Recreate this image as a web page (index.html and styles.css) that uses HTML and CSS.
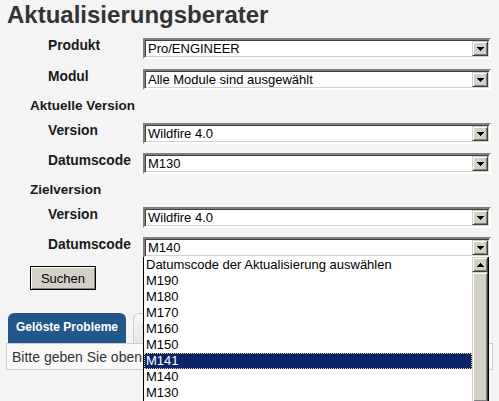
FILE: index.html
```html
<!DOCTYPE html>
<html lang="de">
<head>
    <meta charset="UTF-8">
    <meta name="viewport" content="width=device-width, initial-scale=1.0">
    <title>Aktualisierungsberater</title>
    <link rel="stylesheet" href="styles.css">
</head>
<body>
    <div class="page">
        <h1 class="title">Aktualisierungsberater</h1>

        <div class="group first">
            <div class="row">
                <span class="label">Produkt</span>
                <div class="select"><span class="value">Pro/ENGINEER</span><span class="arrow"><svg width="7" height="4" viewBox="0 0 7 4" shape-rendering="crispEdges"><path d="M0 0h7v1h-1v1h-1v1h-1v1h-1v-1h-1v-1h-1v-1h-1z" fill="#000"/></svg></span></div>
            </div>
            <div class="row">
                <span class="label">Modul</span>
                <div class="select"><span class="value">Alle Module sind ausgewählt</span><span class="arrow"><svg width="7" height="4" viewBox="0 0 7 4" shape-rendering="crispEdges"><path d="M0 0h7v1h-1v1h-1v1h-1v1h-1v-1h-1v-1h-1v-1h-1z" fill="#000"/></svg></span></div>
            </div>
        </div>

        <h2 class="section">Aktuelle Version</h2>
        <div class="group">
            <div class="row">
                <span class="label">Version</span>
                <div class="select"><span class="value">Wildfire 4.0</span><span class="arrow"><svg width="7" height="4" viewBox="0 0 7 4" shape-rendering="crispEdges"><path d="M0 0h7v1h-1v1h-1v1h-1v1h-1v-1h-1v-1h-1v-1h-1z" fill="#000"/></svg></span></div>
            </div>
            <div class="row">
                <span class="label">Datumscode</span>
                <div class="select"><span class="value">M130</span><span class="arrow"><svg width="7" height="4" viewBox="0 0 7 4" shape-rendering="crispEdges"><path d="M0 0h7v1h-1v1h-1v1h-1v1h-1v-1h-1v-1h-1v-1h-1z" fill="#000"/></svg></span></div>
            </div>
        </div>

        <h2 class="section">Zielversion</h2>
        <div class="group">
            <div class="row">
                <span class="label">Version</span>
                <div class="select"><span class="value">Wildfire 4.0</span><span class="arrow"><svg width="7" height="4" viewBox="0 0 7 4" shape-rendering="crispEdges"><path d="M0 0h7v1h-1v1h-1v1h-1v1h-1v-1h-1v-1h-1v-1h-1z" fill="#000"/></svg></span></div>
            </div>
            <div class="row">
                <span class="label">Datumscode</span>
                <div class="select open">
                    <span class="value">M140</span><span class="arrow"><svg width="7" height="4" viewBox="0 0 7 4" shape-rendering="crispEdges"><path d="M0 0h7v1h-1v1h-1v1h-1v1h-1v-1h-1v-1h-1v-1h-1z" fill="#000"/></svg></span>
                    <div class="listbox">
                        <ul class="options">
                            <li>Datumscode der Aktualisierung auswählen</li>
                            <li>M190</li>
                            <li>M180</li>
                            <li>M170</li>
                            <li>M160</li>
                            <li>M150</li>
                            <li class="selected">M141</li>
                            <li>M140</li>
                            <li>M130</li>
                        </ul>
                        <div class="scrollbar">
                            <span class="scroll-btn"><svg width="7" height="4" viewBox="0 0 7 4" shape-rendering="crispEdges"><path d="M3 0h1v1h1v1h1v1h1v1h-7v-1h1v-1h1v-1h1z" fill="#000"/></svg></span>
                            <span class="thumb"></span>
                        </div>
                    </div>
                </div>
            </div>
        </div>

        <button class="search">Suchen</button>

        <div class="tabs">
            <span class="tab active">Gelöste Probleme</span>
            <span class="tab">Gemeldete Probleme</span>
        </div>
        <div class="tab-body">Bitte geben Sie oben die gewünschten Kriterien ein.</div>
    </div>
</body>
</html>
```

FILE: styles.css
```css
body {
    margin: 0;
    background-color: #f4f4f4;
    font-family: "Liberation Sans", Arial, sans-serif;
    color: #1a1a1a;
    height: 401px;
    overflow: hidden;
}
.page {
    padding: 0 6px;
}
.title {
    margin: 1px 0 0 1px;
    font-size: 24px;
    line-height: 28px;
    font-weight: bold;
    color: #333;
}
.group {
    display: flex;
    flex-direction: column;
    gap: 9px;
    padding-left: 42px;
}
.group.first {
    margin-top: 9px;
    gap: 10px;
}
.row {
    display: flex;
    align-items: flex-start;
}
.label {
    width: 95px;
    font-size: 13.8px;
    line-height: 16px;
    font-weight: bold;
}
.section {
    margin: 8px 0 9px 24px;
    font-size: 13.5px;
    line-height: 16px;
    font-weight: bold;
}
.select {
    position: relative;
    display: flex;
    width: 348px;
    height: 21px;
    box-sizing: border-box;
    background: #fff;
    border: 2px solid;
    border-color: #808080 #fff #fff #808080;
    box-shadow: inset 1px 1px #404040, inset -1px -1px #d4d0c8;
}
.value {
    flex: 1;
    padding: 0 3px;
    font-size: 13px;
    line-height: 17px;
    color: #000;
    white-space: nowrap;
    overflow: hidden;
}
.arrow, .scroll-btn {
    display: flex;
    align-items: center;
    justify-content: center;
    width: 16px;
    box-sizing: border-box;
    background: #d4d0c8;
    border: 1px solid;
    border-color: #d4d0c8 #404040 #404040 #d4d0c8;
    box-shadow: inset 1px 1px #fff, inset -1px -1px #808080;
}
.arrow {
    margin: 1px 1px 1px 0;
}
.listbox {
    position: absolute;
    top: 18px;
    left: -2px;
    width: 346px;
    height: 146px;
    box-sizing: border-box;
    display: flex;
    background: #fff;
    border: 1px solid #000;
    border-top: 0;
    overflow: hidden;
    z-index: 2;
}
.options {
    flex: 1;
    margin: 0;
    padding: 0;
    list-style: none;
    font-size: 13px;
    line-height: 16px;
    color: #000;
}
.options li {
    padding-left: 2px;
    white-space: nowrap;
}
.options .selected {
    background: #0a246a;
    color: #fff;
    outline: 1px dotted #e8d070;
    outline-offset: -1px;
}
.scrollbar {
    display: flex;
    flex-direction: column;
    width: 16px;
}
.scroll-btn {
    height: 15px;
}
.thumb {
    flex: 1;
    background: #d4d0c8;
    border: 1px solid;
    border-color: #d4d0c8 #404040 #404040 #d4d0c8;
    box-shadow: inset 1px 1px #fff, inset -1px -1px #808080;
}
.search {
    display: block;
    margin: 8px 0 0 24px;
    width: 66px;
    height: 24px;
    padding: 0;
    font-family: "Liberation Sans", Arial, sans-serif;
    font-size: 13px;
    color: #000;
    background: #d4d0c8;
    border: 1px solid #000;
    box-shadow: inset 1px 1px #fff, inset -1px -1px #808080;
}
.tabs {
    display: flex;
    align-items: flex-end;
    gap: 7px;
    margin: 23px 0 0 2px;
}
.tab {
    padding: 6px 8px 8px;
    font-size: 12px;
    line-height: 16px;
    font-weight: bold;
    white-space: nowrap;
    border-radius: 6px 6px 0 0;
}
.tab.active {
    background: #22578a;
    color: #fff;
}
.tab:not(.active) {
    padding-top: 5px;
    background: linear-gradient(#f8f8f8, #e6e6e6);
    border: 1px solid #ccc;
    border-bottom: 0;
    color: #a0a0a0;
}
.tab-body {
    padding: 5px 5px 4px;
    font-size: 14px;
    line-height: 16px;
    color: #333;
    background: #f9f9f9;
    border: 1px solid #ccc;
    white-space: nowrap;
    overflow: hidden;
}
```
